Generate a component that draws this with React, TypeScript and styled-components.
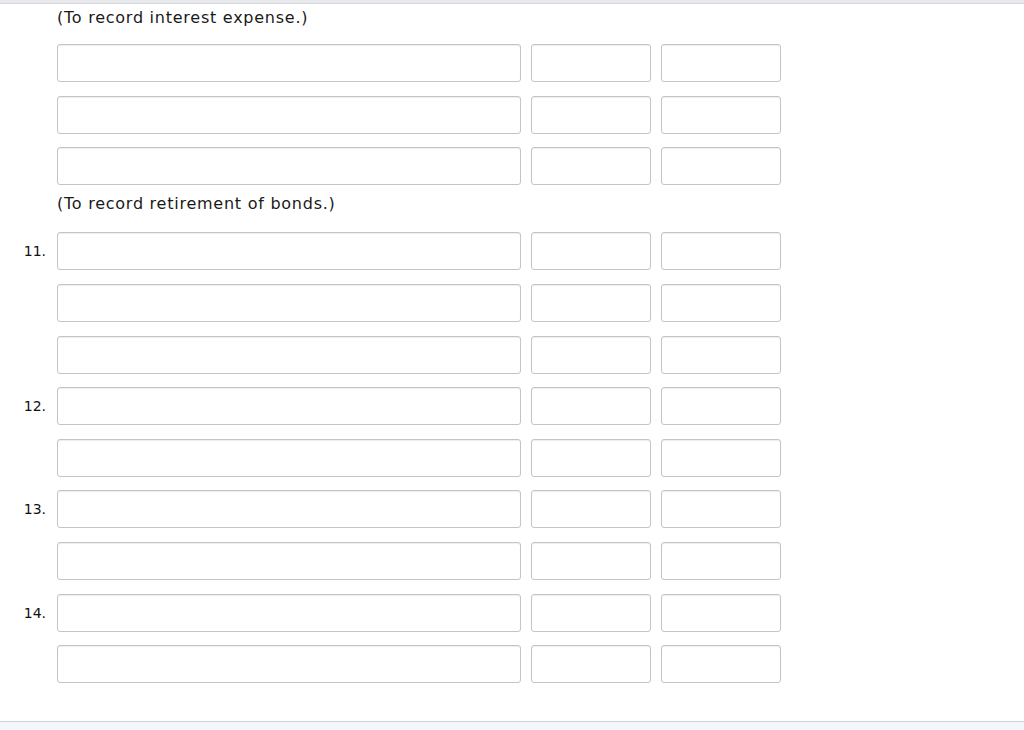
import styled, {createGlobalStyle} from "styled-components";

const GlobalStyle = createGlobalStyle`
	html, body {
		margin: 0;
		padding: 0;
		background: #fff;
	}
	body {
		font-family: "DejaVu Sans", Verdana, sans-serif;
		color: #1a1a1a;
	}
`

type Line = {label?: string}

const interestGroup: Line[] = [{}, {}, {}]
const retirementGroup: Line[] = [
	{label: "11."}, {}, {},
	{label: "12."}, {},
	{label: "13."}, {},
	{label: "14."}, {},
]

/**
 * Journal entry form rows
 */
export default function App() {
	return (
		<>
			<GlobalStyle/>
			<Page>
				<TopBar/>
				<Note $top={4}>(To record interest expense.)</Note>
				<Group $top={16}>
					{interestGroup.map((row, i) => <EntryRow key={i} label={row.label}/>)}
				</Group>
				<Note $top={9}>(To record retirement of bonds.)</Note>
				<Group $top={18}>
					{retirementGroup.map((row, i) => <EntryRow key={i} label={row.label}/>)}
				</Group>
				<Footer/>
			</Page>
		</>
	)
}

function EntryRow({label}: Line) {
	return (
		<Row>
			<Label>{label}</Label>
			<Field $width={464}/>
			<Field $width={120}/>
			<Field $width={120}/>
		</Row>
	)
}

const Page = styled.main`
	width: 1024px;
	min-height: 730px;
	display: flex;
	flex-direction: column;
`

const TopBar = styled.div`
	height: 3px;
	background: #e7e9ed;
	border-bottom: 1px solid #d4d8dd;
`

const Note = styled.div<{ $top: number }>`
	margin-top: ${p => p.$top}px;
	padding-left: 57px;
	font-size: 16px;
	letter-spacing: 0.75px;
	line-height: 20px;
	color: #1a1a1a;
`

const Group = styled.div<{ $top: number }>`
	margin-top: ${p => p.$top}px;
	display: flex;
	flex-direction: column;
	gap: 13.625px;
`

const Row = styled.div`
	display: flex;
	align-items: center;
	gap: 10px;
	height: 38px;
`

const Label = styled.span`
	width: 46px;
	padding-right: 1px;
	text-align: right;
	font-size: 14px;
	color: #111;
`

const Field = styled.input.attrs({type: "text"})<{ $width: number }>`
	box-sizing: border-box;
	width: ${p => p.$width}px;
	height: 38px;
	margin: 0;
	padding: 4px 8px;
	border: 1px solid #c4c4c4;
	border-radius: 3px;
	background: #fff;
	box-shadow: inset 0 1px 1px rgba(0, 0, 0, 0.07);
	font: inherit;
	outline: none;
`

const Footer = styled.div`
	margin-top: auto;
	height: 8px;
	background: #f3f7fb;
	border-top: 1px solid #c9d2db;
`
